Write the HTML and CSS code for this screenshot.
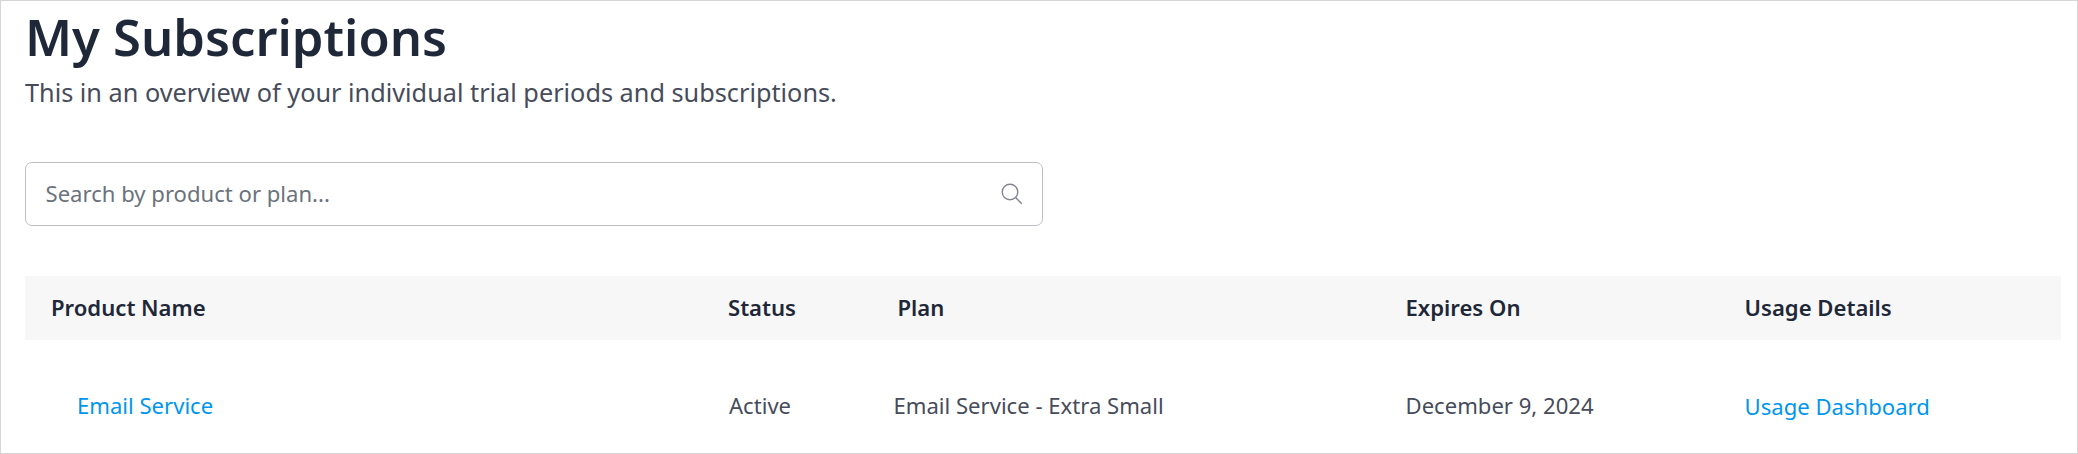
FILE: index.html
```html
<!DOCTYPE html>
<html lang="en">
<head>
<meta charset="utf-8">
<title>My Subscriptions</title>
<link rel="stylesheet" href="styles.css">
</head>
<body>
<main class="page">
  <h1 class="title">My Subscriptions</h1>
  <p class="intro">This in an overview of your individual trial periods and subscriptions.</p>
  <div class="search">
    <span class="placeholder">Search by product or plan...</span>
    <svg class="icon" viewBox="0 0 22 22"><circle cx="9" cy="9" r="7.8"/><path d="M14.6 14.6L20.8 20.8"/></svg>
  </div>
  <div class="table">
    <div class="row head">
      <span class="name">Product Name</span><span>Status</span><span class="plan">Plan</span><span>Expires On</span><span>Usage Details</span>
    </div>
    <div class="row item">
      <span class="name"><a class="link">Email Service</a></span><span class="status">Active</span><span class="plan">Email Service - Extra Small</span><span>December 9, 2024</span><span class="usage"><a class="link">Usage Dashboard</a></span>
    </div>
  </div>
</main>
</body>
</html>
```
FILE: styles.css
```css
* { box-sizing: border-box; }
body { margin: 0; background: #fff; }
.page {
  height: 454px;
  overflow: hidden;
  border: 1px solid #d5d5d5;
  padding: 0 16px 0 24px;
  font-family: "Noto Sans", sans-serif;
  color: #474c5b;
}
.title { margin: 0; padding-top: 1px; font-size: 50.7px; line-height: 70px; font-weight: 600; color: #1f2839; }
.intro { margin: 2px 0 0; font-size: 25.28px; line-height: 36px; }
.search {
  display: flex;
  align-items: center;
  justify-content: space-between;
  width: 1018px;
  height: 64px;
  margin-top: 52px;
  padding: 0 19px 0 19.5px;
  border: 1px solid #bfbfc3;
  border-radius: 7px;
  font-size: 22.1px;
  color: #6b727c;
}
.placeholder { padding-bottom: 2px; }
.icon { width: 22px; height: 22px; fill: none; stroke: #858790; stroke-width: 1.4; }
.table { margin-top: 50px; font-size: 22.1px; }
.row {
  display: grid;
  grid-template-columns: 677px 169.5px 508px 339px 1fr;
  padding-left: 26px;
  padding-bottom: 2px;
  align-items: center;
  white-space: nowrap;
}
.head { height: 64px; background: #f7f7f7; font-weight: 600; color: #1f2839; }
.item { height: 132px; }
.item .name { padding-left: 26px; }
.item .status { padding-left: 1px; }
.item .plan { margin-left: -4px; }
.item .usage { padding-top: 2px; }
.link { color: #0096ee; }
```
